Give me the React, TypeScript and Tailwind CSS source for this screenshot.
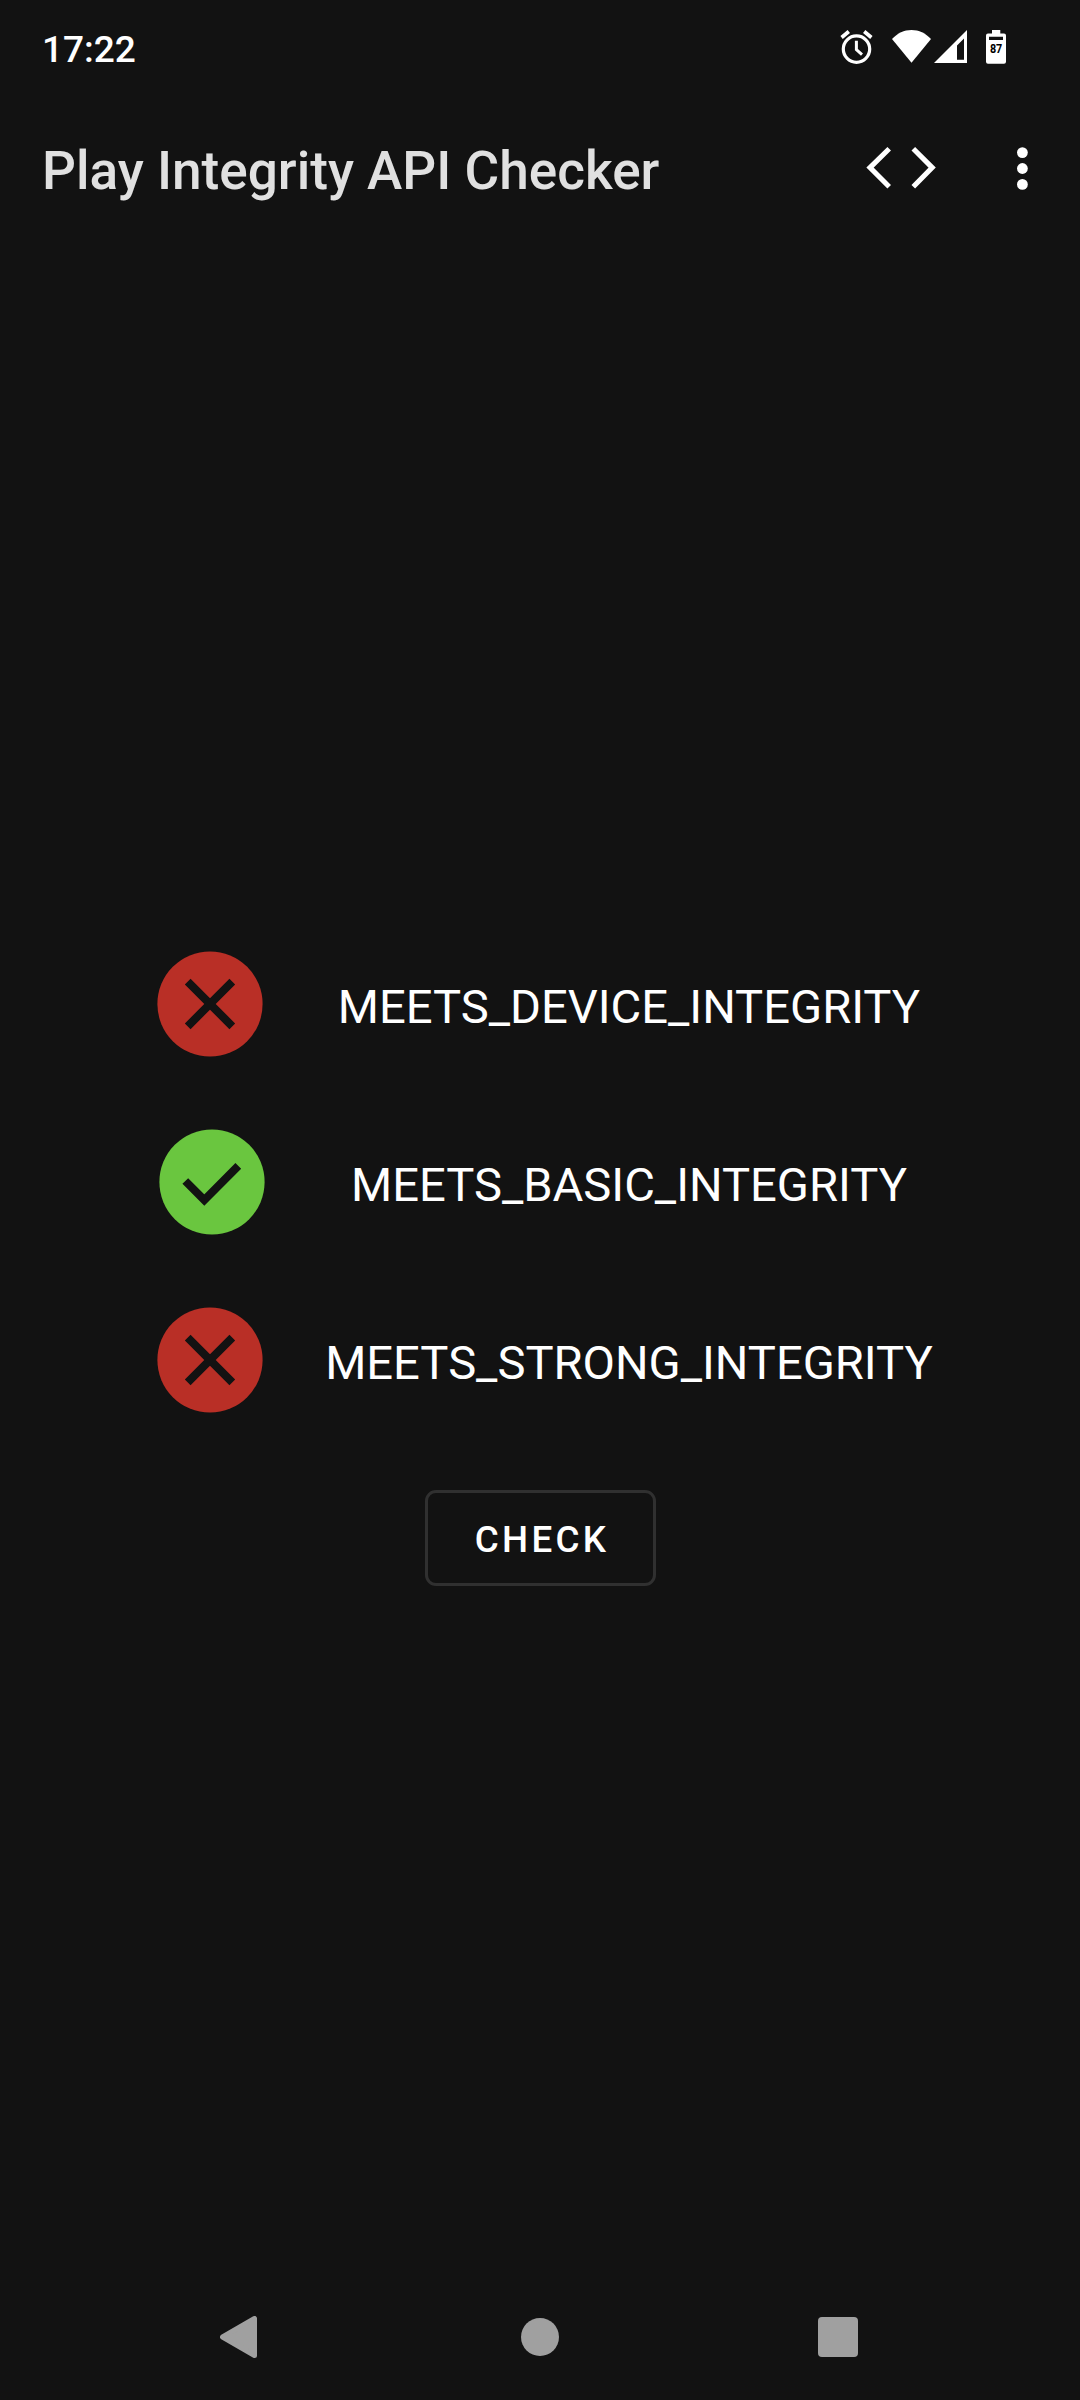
const MARK_COLORS = { pass: 'text-[#6ac63f]', fail: 'text-[#b92f26]' }

type Verdict = { label: string; passed: boolean }

const verdicts: Verdict[] = [
  { label: 'MEETS_DEVICE_INTEGRITY', passed: false },
  { label: 'MEETS_BASIC_INTEGRITY', passed: true },
  { label: 'MEETS_STRONG_INTEGRITY', passed: false },
]

function StatusIcons() {
  return (
    <svg className="mb-[4px] h-[40px] w-[160px]" viewBox="850 26 160 40" overflow="visible" fill="#fff">
      {/* alarm */}
      <circle cx="856.5" cy="49.1" r="13.2" fill="none" stroke="#fff" strokeWidth="3.2" />
      <path d="M841.6 37.4 L848.8 31.6 M871.4 37.4 L864.2 31.6" stroke="#fff" strokeWidth="3.8" />
      <path d="M856.4 40.8 V49.6 L862 54.6" fill="none" stroke="#fff" strokeWidth="3" />
      {/* wifi */}
      <path d="M911.5 62.8 L892 39 C897.5 33.2 904 30 911.5 30 C919 30 925.5 33.2 931 39 Z" />
      {/* mobile signal */}
      <path fillRule="evenodd" d="M934 63 L967 30 V63 Z M957 45.5 V59.7 H964 V38.5 Z" />
      {/* battery */}
      <path
        fillRule="evenodd"
        d="M992 30 H1000.3 V33.4 H1004 Q1006 33.4 1006 35.4 V61.8 Q1006 63.8 1004 63.8 H988 Q986 63.8 986 61.8 V35.4 Q986 33.4 988 33.4 H992 Z M989 36.8 V40 H1003 V36.8 Z"
      />
      <text x="996.1" y="53.2" textAnchor="middle" fill="#000" className="font-bold text-[13px]" textLength="12.4" lengthAdjust="spacingAndGlyphs">
        87
      </text>
    </svg>
  )
}

function VerdictMark({ passed }: { passed: boolean }) {
  return (
    <svg
      className={`size-[126px] shrink-0 ${passed ? MARK_COLORS.pass : MARK_COLORS.fail}`}
      viewBox="-63 -63 126 126"
    >
      <circle r="52.6" fill="currentColor" />
      <path
        d={passed ? 'M-26.7 -1 L-7.7 18 L26.3 -16.2' : 'M-22.3 -22.3 L22.3 22.3 M22.3 -22.3 L-22.3 22.3'}
        fill="none"
        stroke="#121212"
        strokeWidth="8.1"
      />
    </svg>
  )
}

export default function App() {
  return (
    <div className="flex h-[2400px] w-[1080px] flex-col bg-[#121212] font-['Roboto',sans-serif] text-white">
      <div className="flex h-[96px] items-center justify-between pr-[70px] pl-[42px]">
        <span className="pt-[2px] text-[37px] leading-none font-medium">17:22</span>
        <StatusIcons />
      </div>

      <header className="flex h-[147px] items-center pl-[42px]">
        <h1 className="mt-[2px] grow text-[53.15px] leading-[62px] font-medium whitespace-nowrap text-[#e0e0e0]">
          Play Integrity API Checker
        </h1>
        <svg className="h-[147px] w-[220px]" viewBox="860 96 220 147" fill="none">
          <path
            d="M889.2 148.8 L870 167.6 L889.2 186.8 M913.3 148.8 L932.2 167.6 L913.3 186.8"
            stroke="#fff"
            strokeWidth="5.1"
          />
          <g fill="#fff">
            <circle cx="1022.4" cy="152.6" r="5.4" />
            <circle cx="1022.4" cy="168.5" r="5.4" />
            <circle cx="1022.4" cy="184.4" r="5.4" />
          </g>
        </svg>
      </header>

      <main className="flex grow flex-col items-center pt-[698px]">
        <ul className="flex w-full flex-col gap-[52px]">
          {verdicts.map(({ label, passed }) => (
            <li key={label} className={`flex items-center ${passed ? 'pl-[149px]' : 'pl-[147px]'}`}>
              <VerdictMark passed={passed} />
              <span className={`w-[712px] pt-[6px] text-center text-[47.15px] leading-[56px] ${passed ? '-ml-[2px]' : ''}`}>
                {label}
              </span>
            </li>
          ))}
        </ul>
        <button className="mt-[67px] ml-[1px] flex h-[96px] w-[231px] items-center justify-center rounded-[11px] border-[3px] border-[#303030] pt-[3px] pl-[3px] text-[36.75px] font-medium tracking-[3.28px]">
          CHECK
        </button>
      </main>

      <nav className="flex h-[126px] items-center justify-between pr-[222px] pl-[220px]">
        <svg className="h-[42px] w-[37px]" viewBox="0 0 37 42">
          <path d="M2.5 21 L34.5 2.5 V39.5 Z" fill="#a0a0a0" stroke="#a0a0a0" strokeWidth="5" strokeLinejoin="round" />
        </svg>
        <span className="ml-[5px] size-[37.5px] rounded-full bg-[#a0a0a0]" />
        <span className="size-[40px] rounded-[4px] bg-[#a0a0a0]" />
      </nav>
    </div>
  )
}
